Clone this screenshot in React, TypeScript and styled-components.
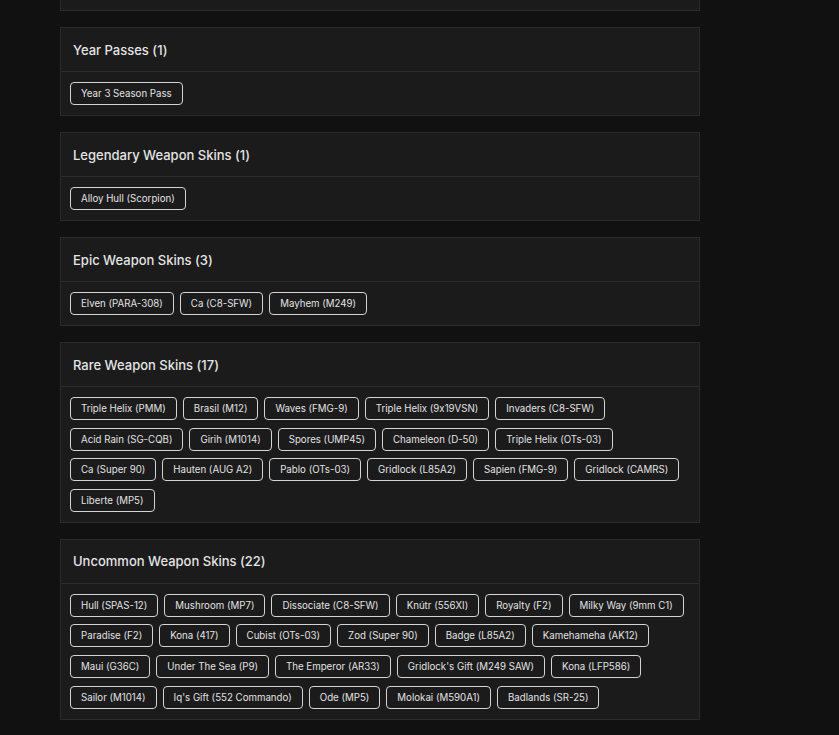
import { FunctionComponent } from 'react';
import styled, { createGlobalStyle } from 'styled-components';

const GlobalStyle = createGlobalStyle`
  html, body {
    margin: 0;
    padding: 0;
    background: #111111;
  }
  body {
    font-family: Inter, "Noto Sans", sans-serif;
    font-feature-settings: "calt" 0;
  }
`;

type Section = {
  title: string;
  items: string[];
};

const sections: Section[] = [
  {
    title: 'Year Passes',
    items: ['Year 3 Season Pass'],
  },
  {
    title: 'Legendary Weapon Skins',
    items: ['Alloy Hull (Scorpion)'],
  },
  {
    title: 'Epic Weapon Skins',
    items: ['Elven (PARA-308)', 'Ca (C8-SFW)', 'Mayhem (M249)'],
  },
  {
    title: 'Rare Weapon Skins',
    items: [
      'Triple Helix (PMM)',
      'Brasil (M12)',
      'Waves (FMG-9)',
      'Triple Helix (9x19VSN)',
      'Invaders (C8-SFW)',
      'Acid Rain (SG-CQB)',
      'Girih (M1014)',
      'Spores (UMP45)',
      'Chameleon (D-50)',
      'Triple Helix (OTs-03)',
      'Ca (Super 90)',
      'Hauten (AUG A2)',
      'Pablo (OTs-03)',
      'Gridlock (L85A2)',
      'Sapien (FMG-9)',
      'Gridlock (CAMRS)',
      'Liberte (MP5)',
    ],
  },
  {
    title: 'Uncommon Weapon Skins',
    items: [
      'Hull (SPAS-12)',
      'Mushroom (MP7)',
      'Dissociate (C8-SFW)',
      'Knútr (556XI)',
      'Royalty (F2)',
      'Milky Way (9mm C1)',
      'Paradise (F2)',
      'Kona (417)',
      'Cubist (OTs-03)',
      'Zod (Super 90)',
      'Badge (L85A2)',
      'Kamehameha (AK12)',
      'Maui (G36C)',
      'Under The Sea (P9)',
      'The Emperor (AR33)',
      "Gridlock's Gift (M249 SAW)",
      'Kona (LFP586)',
      'Sailor (M1014)',
      "Iq's Gift (552 Commando)",
      'Ode (MP5)',
      'Molokai (M590A1)',
      'Badlands (SR-25)',
    ],
  },
];

const App: FunctionComponent = () => {
  return (
    <>
      <GlobalStyle />
      <Page>
        {/* only the bottom edge of the previous card is visible */}
        <Card>
          <CardBody>
            <ActionButton aria-label="more" />
          </CardBody>
        </Card>
        {sections.map((section) => (
          <Card key={section.title}>
            <CardHeader>
              {section.title} ({section.items.length})
            </CardHeader>
            <CardBody>
              {section.items.map((item) => (
                <Tag key={item}>{item}</Tag>
              ))}
            </CardBody>
          </Card>
        ))}
      </Page>
    </>
  );
};

export default App;

const Page = styled.div`
display: flex;
flex-direction: column;
gap: 16px;
width: 640px;
margin-top: -36px;
padding: 0 0 16px 60px;
`;

const Card = styled.section`
background: #1b1b1b;
border: 1px solid #2b2b2b;
`;

const CardHeader = styled.div`
height: 43px;
display: flex;
align-items: center;
padding: 0 12px;
border-bottom: 1px solid #2d2d2d;
color: #e4e4e4;
font-size: 13px;
font-weight: 500;
`;

const CardBody = styled.div`
display: flex;
flex-wrap: wrap;
column-gap: 6px;
row-gap: 7.6px;
padding: 10px 9px;
`;

const Tag = styled.span`
display: inline-flex;
align-items: center;
height: 23px;
box-sizing: border-box;
padding: 0 10px;
border: 1px solid #d4d4d4;
border-radius: 4px;
color: #e2e2e2;
font-size: 9.7px;
white-space: nowrap;
`;

const ActionButton = styled.button`
width: 123px;
height: 25px;
border: 1px solid #e0e0e0;
border-radius: 4px;
background: #cfcfcf;
`;
